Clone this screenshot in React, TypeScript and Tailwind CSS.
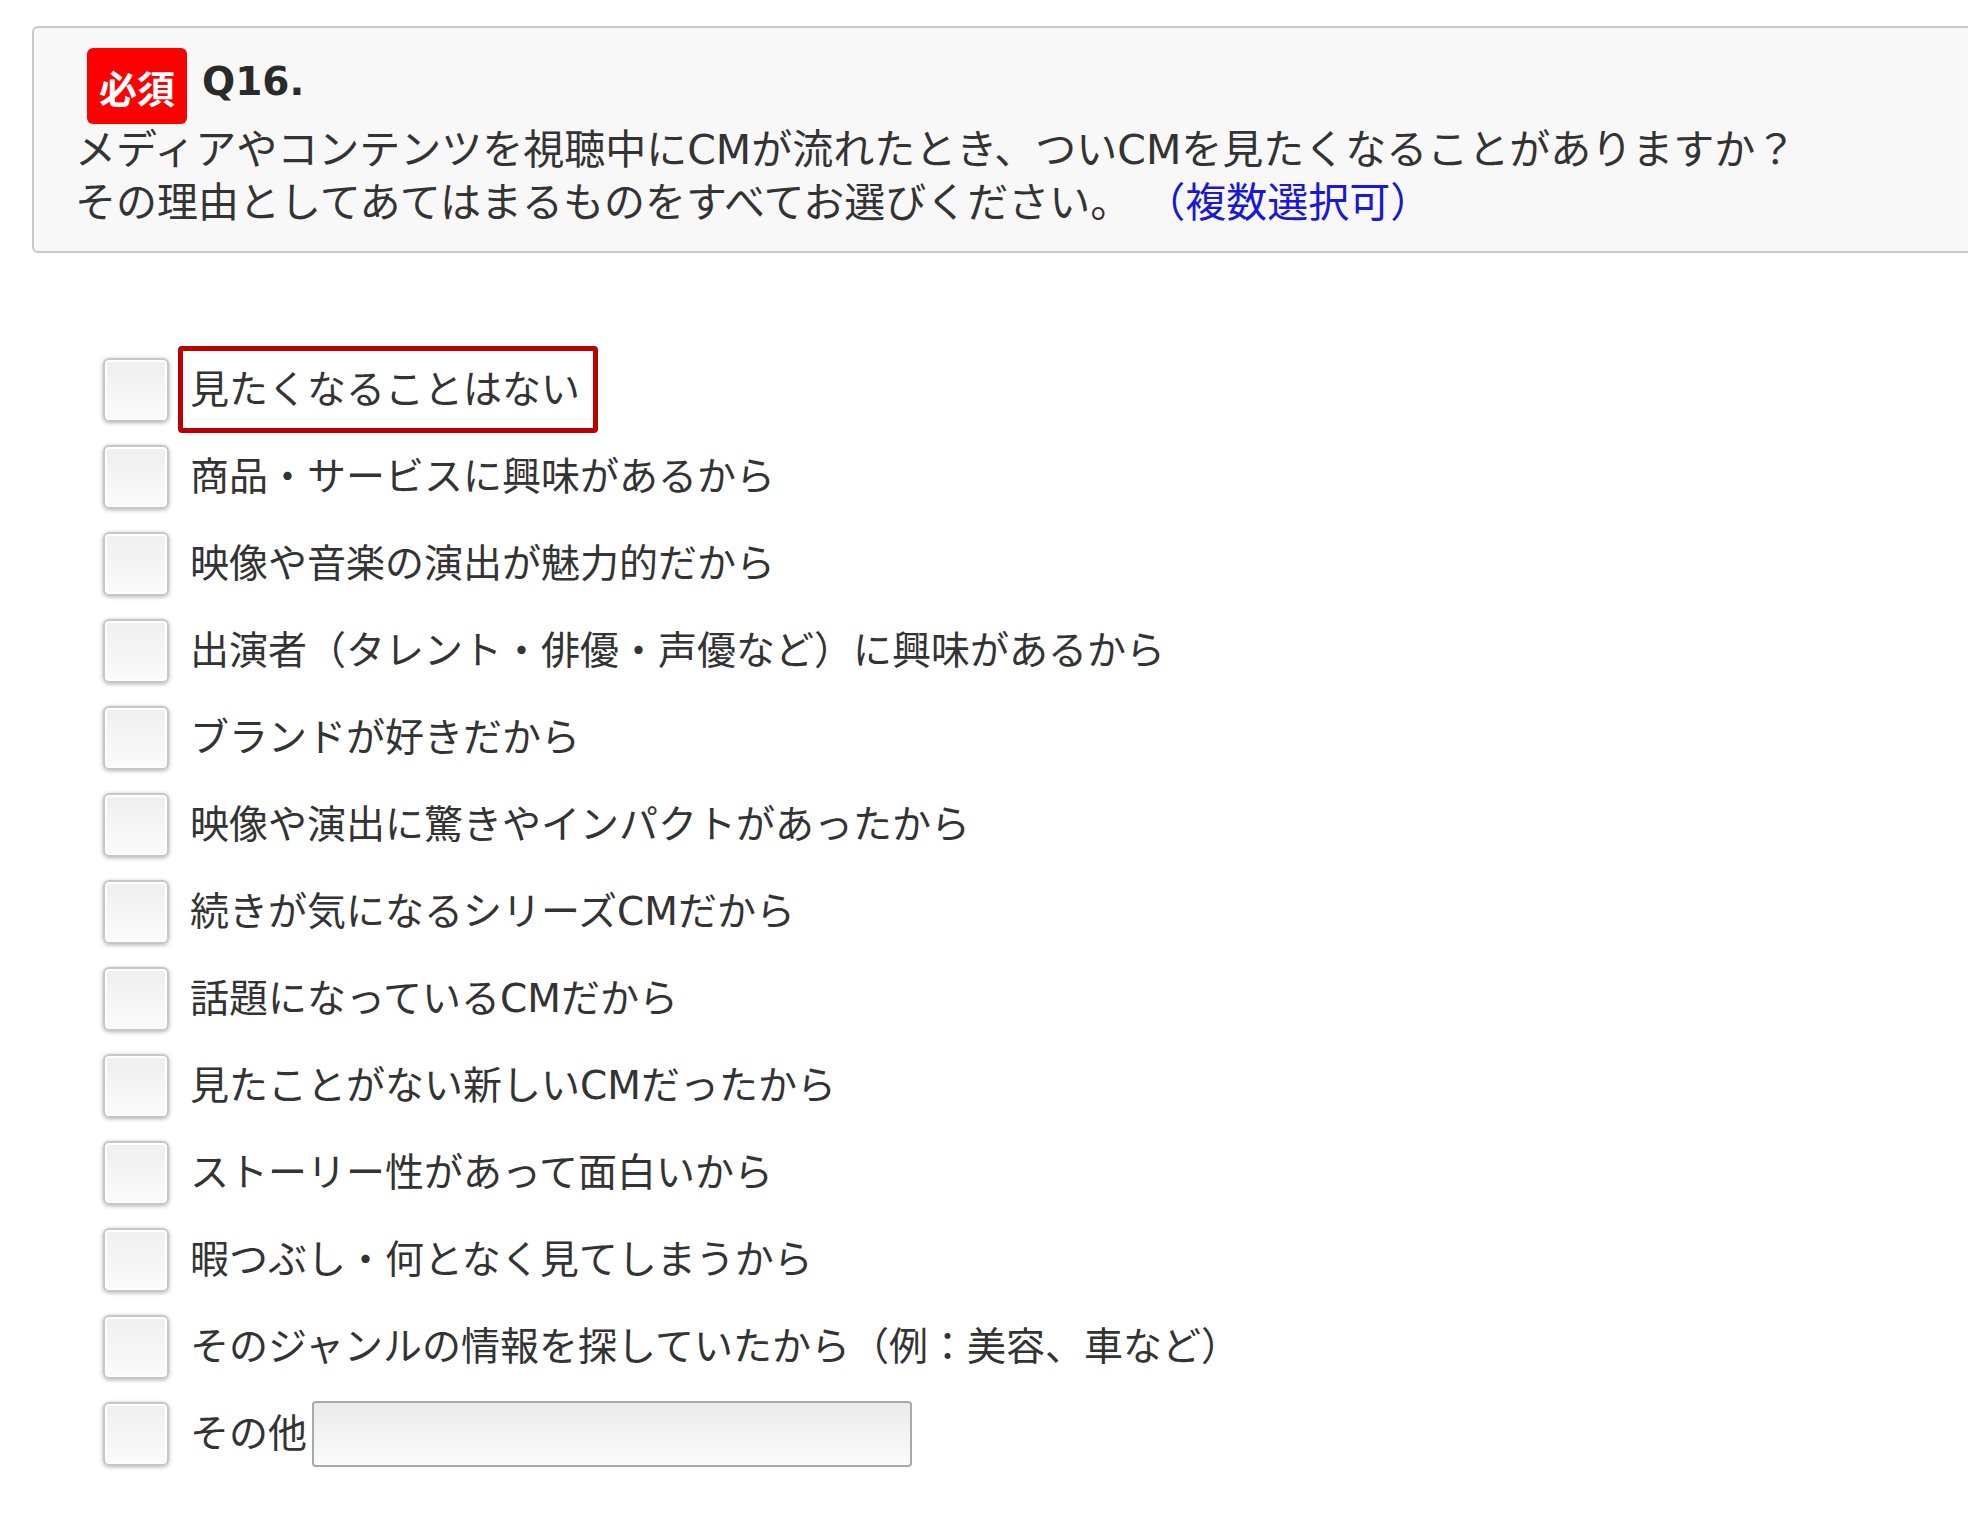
import React from "react";

const options = [
  "見たくなることはない",
  "商品・サービスに興味があるから",
  "映像や音楽の演出が魅力的だから",
  "出演者（タレント・俳優・声優など）に興味があるから",
  "ブランドが好きだから",
  "映像や演出に驚きやインパクトがあったから",
  "続きが気になるシリーズCMだから",
  "話題になっているCMだから",
  "見たことがない新しいCMだったから",
  "ストーリー性があって面白いから",
  "暇つぶし・何となく見てしまうから",
  "そのジャンルの情報を探していたから（例：美容、車など）",
];

const CheckBox = () => (
  <span className="block w-[66px] h-[64px] shrink-0 rounded-[6px] border-2 border-[#c6c6c6] bg-linear-to-b from-[#efefef] to-[#fbfbfb] shadow-[inset_0_0_0_2px_#ffffff,0_1px_4px_rgba(0,0,0,0.3)]" />
);

const App = () => {
  return (
    <div className="w-full min-h-screen overflow-hidden bg-white font-['DejaVu_Sans','Noto_Sans_CJK_JP',sans-serif] text-[#333]">
      <div className="ml-[32px] mt-[26px] w-[1960px] rounded-[6px] border-2 border-[#c9c9c9] bg-[#f8f8f8] pl-[41px] pt-[20px] pb-[21px]">
        <div className="flex h-[76px] items-start">
          <span className="ml-[12px] flex h-[76px] w-[100px] items-center justify-center rounded-[6px] bg-[#ff0000] font-['Noto_Sans_CJK_JP',sans-serif] text-[38px] font-bold text-white">
            必須
          </span>
          <span className="ml-[15px] mt-[14px] text-[39px] font-bold leading-[39px] text-[#2a2a2a]">
            Q16.
          </span>
        </div>
        <p className="text-[41px] leading-[53px]">
          メディアやコンテンツを視聴中にCMが流れたとき、ついCMを見たくなることがありますか？
          <br />
          その理由としてあてはまるものをすべてお選びください。{" "}
          <span className="text-[#1818d6]">（複数選択可）</span>
        </p>
      </div>

      <div className="ml-[103px] mt-[93px] flex flex-col">
        {options.map((text, i) => (
          <div key={text} className="flex h-[87px] items-center">
            <CheckBox />
            <div
              className={
                i === 0
                  ? "ml-[9px] flex h-[87px] items-center rounded-[4px] border-[5px] border-[#bb0000] pl-[7px] pr-[13px]"
                  : "ml-[9px] flex h-[87px] items-center border-[5px] border-transparent pl-[7px] pr-[13px]"
              }
            >
              <span className="text-[39px] leading-none whitespace-nowrap">{text}</span>
            </div>
          </div>
        ))}
        <div className="flex h-[87px] items-center">
          <CheckBox />
          <div className="ml-[9px] flex h-[87px] items-center border-[5px] border-transparent pl-[7px]">
            <span className="text-[39px] leading-none whitespace-nowrap">その他</span>
            <input
              type="text"
              className="ml-[5px] h-[66px] w-[600px] rounded-[4px] border-2 border-[#a9a9a9] bg-linear-to-b from-[#ebebeb] to-[#fbfbfb] outline-none"
            />
          </div>
        </div>
      </div>
    </div>
  );
};

export default App;
